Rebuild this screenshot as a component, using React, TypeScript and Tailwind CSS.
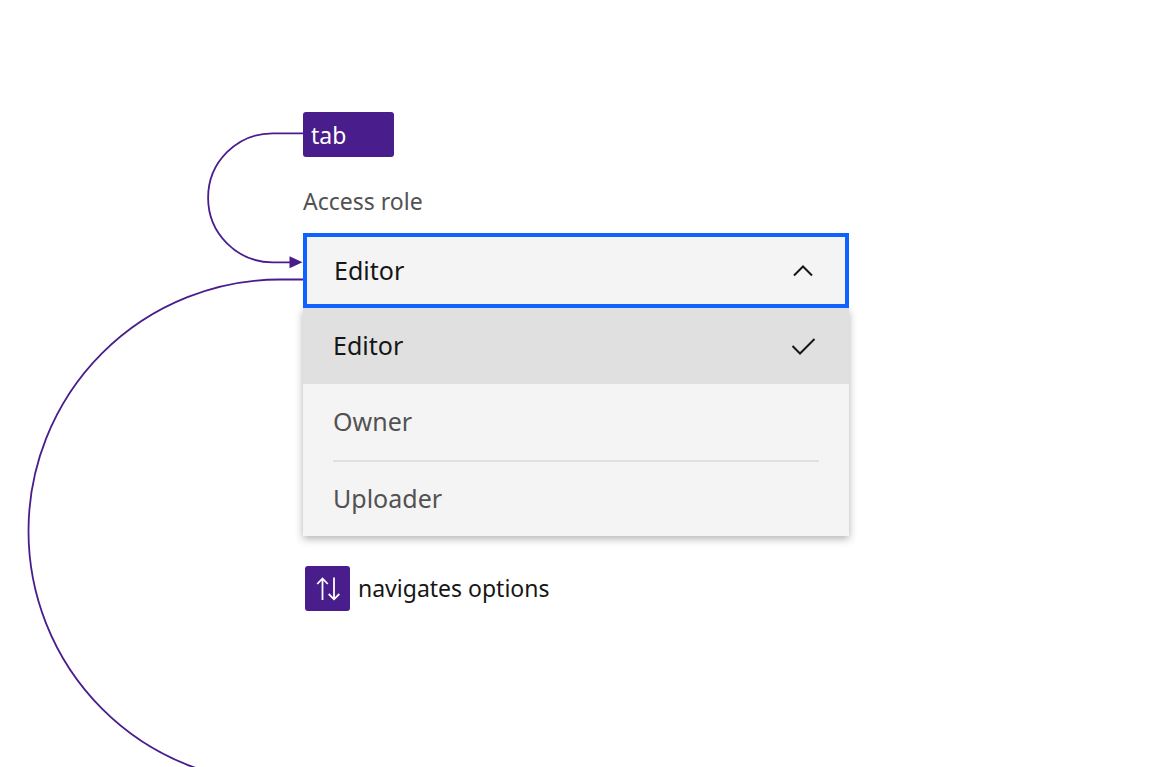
import { useState, type FC } from "react";

const roles = ["Editor", "Owner", "Uploader"];

const Connectors: FC = () => (
    <svg className="w-[303px] shrink-0 self-stretch text-[#491d8b]" fill="none" aria-hidden="true">
        <path d="M303 133.3H272.6A64.5 64.5 0 0 0 272.6 262.3H291" stroke="currentColor" strokeWidth="1.8" />
        <path d="M289.5 256.3L302.5 262.3L289.5 268.3Z" fill="currentColor" />
        <path d="M303 279.5H280A251.5 251.5 0 0 0 280 782.5" stroke="currentColor" strokeWidth="1.8" />
    </svg>
);

const Chevron: FC = () => (
    <svg className="pointer-events-none absolute top-[22px] right-[30px] h-8 w-8" viewBox="0 0 32 32" fill="none" aria-hidden="true">
        <path d="M7 20.5L16 11.5L25 20.5" stroke="#161616" strokeWidth="2" />
    </svg>
);

const Check: FC = () => (
    <svg className="h-8 w-8" viewBox="0 0 32 32" fill="none" aria-hidden="true">
        <path d="M5.5 16L13 23.5L27.5 9" stroke="#161616" strokeWidth="2" />
    </svg>
);

const Arrows: FC = () => (
    <svg className="h-8 w-8" viewBox="0 0 32 32" fill="none" aria-hidden="true">
        <path d="M10.5 27V5.5M5.2 11L10.5 5.5L15.8 11M22 4.5V26.3M16.7 21L22 26.3L27.3 21" stroke="white" strokeWidth="1.8" />
    </svg>
);

const App: FC = () => {
    const [role, setRole] = useState("Editor");

    return (
        <main className="flex min-h-screen overflow-hidden bg-white font-['Noto_Sans',sans-serif] text-[#161616]">
            <Connectors />
            <section className="max-w-[546px] min-w-0 flex-1 pt-28">
                <kbd className="flex h-[45px] w-[91px] items-center rounded-[3px] bg-[#491d8b] px-2 font-['Noto_Sans',sans-serif] text-[23px] leading-8 text-white">
                    tab
                </kbd>
                <label htmlFor="role" className="mt-7 block text-[23px] leading-8 text-[#525252]">
                    Access role
                </label>
                <div className="relative mt-4">
                    <select
                        id="role"
                        value={role}
                        onChange={(e) => setRole(e.target.value)}
                        className="block h-[75px] w-full appearance-none border-4 border-[#0f62fe] bg-[#f4f4f4] px-[27px] text-[25px] outline-none"
                    >
                        {roles.map((name) => (
                            <option key={name}>{name}</option>
                        ))}
                    </select>
                    <Chevron />
                </div>
                <ul className="bg-[#f4f4f4] shadow-[0_3px_8px_rgba(0,0,0,0.3)]">
                    {roles.map((name, i) => {
                        const selected = name === role;
                        const divided = i > 0 && roles[i - 1] !== role && !selected;
                        return (
                            <li key={name} className={selected ? "bg-[#e0e0e0]" : ""}>
                                <button
                                    type="button"
                                    aria-pressed={selected}
                                    onClick={() => setRole(name)}
                                    className={`flex h-[76px] w-full items-center px-[30px] text-left text-[25px] ${selected ? "text-[#161616]" : "text-[#525252]"}`}
                                >
                                    <span className={`flex h-full w-full items-center justify-between ${divided ? "border-t-2 border-[#e0e0e0]" : ""}`}>
                                        {name}
                                        {selected && <Check />}
                                    </span>
                                </button>
                            </li>
                        );
                    })}
                </ul>
                <p className="mt-[30px] flex items-center gap-2 pl-0.5 text-[23px]">
                    <kbd className="flex h-[45px] w-[45px] items-center justify-center rounded-[3px] bg-[#491d8b]">
                        <Arrows />
                    </kbd>
                    navigates options
                </p>
            </section>
        </main>
    );
};

export default App;
